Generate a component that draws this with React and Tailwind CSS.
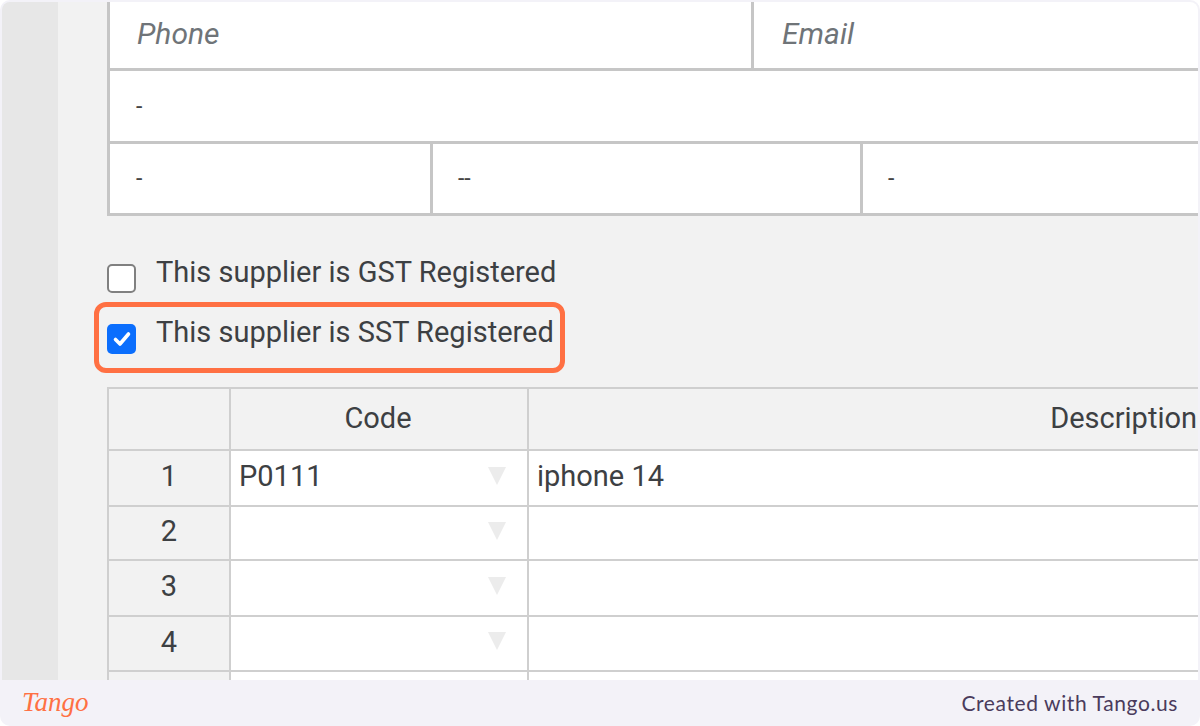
import React from 'react';

const rows = [
  { n: '1', h: 'h-[56px]', code: 'P0111', desc: 'iphone 14' },
  { n: '2', h: 'h-[54px]', code: '', desc: '' },
  { n: '3', h: 'h-[56px]', code: '', desc: '' },
  { n: '4', h: 'h-[55px]', code: '', desc: '' },
  { n: '', h: 'h-[20px]', code: '', desc: '', last: true },
];

function Caret() {
  return (
    <svg width="18" height="18" viewBox="0 0 18 18" className="shrink-0 -mt-[5px]">
      <polygon points="0,0 18,0 9,18" fill="#ececec" />
    </svg>
  );
}

function Checkbox({ checked }) {
  if (checked) {
    return (
      <div className="w-[29px] h-[30px] rounded-[5px] bg-[#0b6efd] flex items-center justify-center">
        <svg width="20" height="20" viewBox="0 0 20 20" fill="none">
          <path d="M3.5 10.5l4.5 4.5 8.5-10" stroke="white" strokeWidth="3.6" strokeLinecap="round" strokeLinejoin="round" />
        </svg>
      </div>
    );
  }
  return <div className="w-[29px] h-[29px] rounded-[5px] bg-white border-2 border-[#808080]"></div>;
}

export default function App() {
  return (
    <div className="w-[1200px] h-[726px] bg-[#f3f2f8] rounded-[10px] flex flex-col overflow-hidden font-['Roboto',sans-serif]">
      <div className="h-[678px] mx-[2px] mt-[2px] flex rounded-t-[8px] overflow-hidden">
        <div className="w-[56px] bg-[#e7e7e7]"></div>

        <div className="relative flex-1 bg-[#f2f2f2] pl-[49px] overflow-hidden">
          {/* supplier address */}
          <div className="bg-white border-l-[3px] border-[#c6c6c6] text-[#444]">
            <div className="flex h-[69px] border-b-[3px] border-[#c6c6c6] text-[30px] leading-[40px] italic text-[#6f7478]">
              <div className="w-[644px] pl-[27px] pt-[12px] border-r-[3px] border-[#c6c6c6]">Phone</div>
              <div className="flex-1 pl-[28px] pt-[12px]">Email</div>
            </div>
            <div className="h-[73px] pl-[26px] pt-[19px] border-b-[3px] border-[#c6c6c6] text-[23px]">-</div>
            <div className="flex h-[72px] border-b-[3px] border-[#c6c6c6] text-[23px]">
              <div className="w-[323px] pl-[26px] pt-[18px] border-r-[3px] border-[#c6c6c6]">-</div>
              <div className="w-[430px] pl-[25px] pt-[18px] border-r-[3px] border-[#c6c6c6]">--</div>
              <div className="flex-1 pl-[25px] pt-[18px]">-</div>
            </div>
          </div>

          {/* registration flags */}
          <div className="pt-[38px] text-[#3d4043] text-[29px] leading-[36px]">
            <div className="flex h-[60px]">
              <div className="mt-[10px]"><Checkbox /></div>
              <span className="ml-[20px]">This supplier is GST Registered</span>
            </div>
            <div className="flex h-[73px]">
              <div className="mt-[10px]"><Checkbox checked /></div>
              <span className="ml-[20px]">This supplier is SST Registered</span>
            </div>
          </div>
          <div className="absolute left-[36px] top-[300px] w-[471px] h-[71px] rounded-[12px] border-[5px] border-[#ff7043]"></div>

          {/* items */}
          <div className="border-t-2 border-l-2 border-[#cfcfcf] text-[29px] leading-[36px] text-[#3d4043]">
            <div className="flex h-[62px] border-b-2 border-[#cfcfcf]">
              <div className="w-[122px] border-r-2 border-[#cfcfcf]"></div>
              <div className="w-[298px] border-r-2 border-[#cfcfcf] flex items-center justify-center pb-[3px] pr-[2px]">Code</div>
              <div className="w-[668px] shrink-0 whitespace-nowrap flex items-center justify-end pb-[3px]">Description</div>
            </div>
            {rows.map((r, idx) => (
              <div key={idx} className={`flex ${r.h} ${r.last ? '' : 'border-b-2 border-[#cfcfcf]'}`}>
                <div className="w-[122px] border-r-2 border-[#cfcfcf] flex items-center justify-center pb-[4px]">{r.n}</div>
                <div className="w-[298px] bg-white border-r-2 border-[#cfcfcf] flex items-center justify-between pl-[8px] pr-[21px]">
                  <span className="-mt-[4px]">{r.code}</span>
                  {!r.last && <Caret />}
                </div>
                <div className="flex-1 bg-white flex items-center pl-[8px] pb-[4px]">{r.desc}</div>
              </div>
            ))}
          </div>
        </div>
      </div>

      <div className="flex-1 flex items-center justify-between pl-[22px] pr-[22px]">
        <span className="font-['Liberation_Serif',serif] italic text-[27px] leading-none text-[#ff7043] -mt-[2px]">Tango</span>
        <span className="font-['Lato',sans-serif] text-[21px] tracking-[0.6px] text-[#4a3b5c]">Created with Tango.us</span>
      </div>
    </div>
  );
}
